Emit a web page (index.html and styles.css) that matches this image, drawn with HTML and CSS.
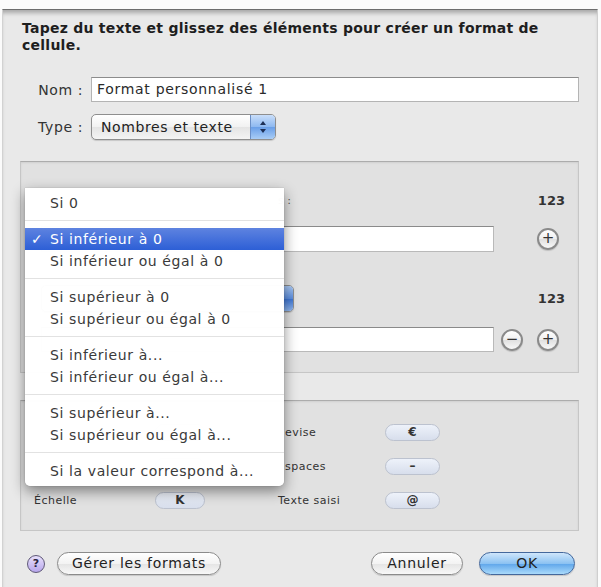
FILE: index.html
```html
<!DOCTYPE html>
<html>
<head>
    <title>Format de cellule</title>
    <link rel="stylesheet" href="styles.css">
</head>
<body>
    <div class="screen-top"></div>

    <!-- format sheet -->
    <div class="dialog">
        <h1 class="intro">Tapez du texte et glissez des éléments pour créer un format de cellule.</h1>

        <div class="form-row row-name">
            <label class="form-label">Nom :</label>
            <div class="text-input">Format personnalisé 1</div>
        </div>
        <div class="form-row row-type">
            <label class="form-label">Type :</label>
            <div class="popup">
                <span class="popup-text">Nombres et texte</span>
                <span class="popup-arrows">
                    <svg width="8" height="14" viewBox="0 0 8 14"><path d="M4 1 L7 5 H1 Z M4 13 L7 9 H1 Z" fill="#1d2f55"/></svg>
                </span>
            </div>
        </div>

        <!-- rules panel, mostly under the open menu -->
        <div class="panel rules">
            <div class="rule-head first">
                <span class="rule-label">s :</span>
                <span class="token-num">123</span>
            </div>
            <div class="rule-field">
                <div class="field"></div>
                <div class="round-btns">
                    <span class="round-btn">+</span>
                </div>
            </div>
            <div class="rule-head second">
                <div class="popup rule-popup">
                    <span class="popup-text"></span>
                    <span class="popup-cap"></span>
                </div>
                <span class="token-num">123</span>
            </div>
            <div class="rule-field">
                <div class="field"></div>
                <div class="round-btns">
                    <span class="round-btn minus">&minus;</span>
                    <span class="round-btn">+</span>
                </div>
            </div>
        </div>

        <!-- elements panel -->
        <div class="panel elements">
            <div class="el-row">
                <span class="el-label"></span><span class="pill blank"></span>
                <span class="el-label right"><span class="cut">evise</span></span><span class="pill wide">€</span>
            </div>
            <div class="el-row">
                <span class="el-label"></span><span class="pill blank"></span>
                <span class="el-label right"><span class="cut">spaces</span></span><span class="pill wide">&ndash;</span>
            </div>
            <div class="el-row">
                <span class="el-label">Échelle</span><span class="pill">K</span>
                <span class="el-label right">Texte saisi</span><span class="pill wide">@</span>
            </div>
        </div>

        <div class="button-row">
            <span class="help">?</span>
            <span class="push-btn manage">Gérer les formats</span>
            <span class="spacer"></span>
            <span class="push-btn cancel">Annuler</span>
            <span class="push-btn ok">OK</span>
        </div>
    </div>

    <!-- open popup menu, lies over the sheet -->
    <div class="menu">
        <div class="menu-item">Si 0</div>
        <div class="menu-sep"></div>
        <div class="menu-item selected"><span class="check">✓</span>Si inférieur à 0</div>
        <div class="menu-item">Si inférieur ou égal à 0</div>
        <div class="menu-sep"></div>
        <div class="menu-item">Si supérieur à 0</div>
        <div class="menu-item">Si supérieur ou égal à 0</div>
        <div class="menu-sep"></div>
        <div class="menu-item">Si inférieur à...</div>
        <div class="menu-item">Si inférieur ou égal à...</div>
        <div class="menu-sep"></div>
        <div class="menu-item">Si supérieur à...</div>
        <div class="menu-item">Si supérieur ou égal à...</div>
        <div class="menu-sep"></div>
        <div class="menu-item">Si la valeur correspond à...</div>
    </div>
</body>
</html>
```

FILE: styles.css
```css
/* page */
body {
    margin: 0;
    background-color: #fbfbfb;
    font-family: 'DejaVu Sans', sans-serif;
    color: #222;
    position: relative;
    width: 601px;
    height: 587px;
    overflow: hidden;
}

.screen-top {
    height: 9px;
    background-color: #fbfbfb;
}

/* sheet */
.dialog {
    margin: 0 3px 0 2px;
    height: 578px;
    box-sizing: border-box;
    padding: 0 18px 0 17px;
    background-color: #e9e9e9;
    border-top: 1px solid #6d6d6d;
    border-left: 1px solid #d2d2d2;
    border-right: 1px solid #cfcfcf;
    box-shadow: inset 0 5px 4px -2px rgba(0, 0, 0, 0.28);
}

.intro {
    margin: 10px 0 0;
    padding-left: 2px;
    font-size: 14px;
    line-height: 17px;
    letter-spacing: 0.25px;
    font-weight: bold;
    color: #1e1e1e;
}

.form-row {
    display: flex;
    align-items: center;
    gap: 8px;
}

.form-label {
    width: 63px;
    text-align: right;
    font-size: 14px;
    letter-spacing: 0.6px;
    color: #333;
}

.row-name {
    margin-top: 23px;
    height: 25px;
}

.row-type {
    margin-top: 12px;
    height: 26px;
}

.text-input {
    flex: 1;
    height: 25px;
    box-sizing: border-box;
    padding: 3px 5px;
    background: #fff;
    border: 1px solid #b4b4b4;
    border-top-color: #8c8c8c;
    font-size: 14px;
    letter-spacing: 0.7px;
    line-height: 17px;
    color: #2a2a2a;
}

/* popup buttons */
.popup {
    display: flex;
    align-items: stretch;
    width: 185px;
    height: 26px;
    box-sizing: border-box;
    border: 1px solid #8e8e8e;
    border-radius: 5px;
    background: linear-gradient(#ffffff, #f1f1f1 50%, #e4e4e4 51%, #f4f4f4);
    overflow: hidden;
    box-shadow: 0 1px 1px rgba(0, 0, 0, 0.15);
}

.popup-text {
    flex: 1;
    padding-left: 9px;
    font-size: 14px;
    letter-spacing: 0.6px;
    line-height: 24px;
    color: #222;
}

.popup-arrows {
    width: 24px;
    display: flex;
    align-items: center;
    justify-content: center;
    border-left: 1px solid #6b8fc6;
    background: linear-gradient(#c9defa, #8db8f0 50%, #6a9fe8 51%, #a9cdf6);
}

.popup-cap {
    width: 9px;
    background: linear-gradient(#a9c8f3, #5d8fe0 50%, #3c74d3 51%, #8fb6ee);
    border-left: 1px solid #5a7fbf;
}

/* panels */
.panel {
    box-sizing: border-box;
    background-color: #e1e1e1;
    border: 1px solid #c6c6c6;
    border-top-color: #acacac;
    box-shadow: inset 0 1px 2px rgba(0, 0, 0, 0.08);
}

.rules {
    margin-top: 21px;
    height: 212px;
    padding: 26px 13px 0 20px;
}

.rule-head {
    display: flex;
    align-items: center;
    justify-content: space-between;
}

.rule-head.first {
    height: 24px;
}

.rule-head.second {
    margin-top: 33px;
    height: 27px;
}

.rule-label {
    width: 250px;
    text-align: right;
    font-size: 11px;
    color: #555;
}

.rule-popup {
    width: 253px;
    height: 27px;
}

.token-num {
    font-size: 13px;
    font-weight: bold;
    color: #333;
}

.rule-field {
    display: flex;
    align-items: center;
    margin-top: 14px;
    height: 26px;
}

.rule-field:last-child {
    margin-top: 15px;
    height: 25px;
}

.field {
    flex: 1;
    height: 100%;
    background: #fff;
    border: 1px solid #b9b9b9;
    border-top-color: #8a8a8a;
    box-sizing: border-box;
}

.round-btns {
    width: 71px;
    box-sizing: border-box;
    padding: 0 6px 0 7px;
    display: flex;
    justify-content: flex-end;
    gap: 14px;
}

.round-btn {
    width: 22px;
    height: 22px;
    box-sizing: border-box;
    border: 2px solid #8a8a8a;
    border-radius: 50%;
    background: linear-gradient(#ffffff, #efefef 50%, #e0e0e0 51%, #f8f8f8);
    font-size: 15px;
    line-height: 17px;
    text-align: center;
    color: #333;
    box-shadow: 0 1px 1px rgba(0, 0, 0, 0.15);
}

.round-btn.minus {
    margin-right: auto;
}

/* element tokens */
.elements {
    margin-top: 27px;
    height: 131px;
    padding: 22px 0 0 13px;
}

.el-row {
    display: flex;
    align-items: center;
    height: 18px;
    margin-bottom: 16px;
}

.el-row:last-child {
    margin-top: 2px;
}

.el-label {
    width: 121px;
    font-size: 11px;
    letter-spacing: 0.5px;
    color: #333;
}

.el-label.right {
    width: 107px;
    margin-left: 73px;
}

/* only the end of these labels shows past the menu */
.cut {
    display: inline-block;
    margin-left: 7px;
}

.pill {
    width: 50px;
    height: 17px;
    box-sizing: border-box;
    border: 1px solid #bcc2cf;
    border-radius: 9px;
    background: linear-gradient(#eef2fa, #d7deec);
    font-size: 12px;
    line-height: 15px;
    text-align: center;
    font-weight: bold;
    color: #333;
}

.pill.wide {
    width: 55px;
}

/* bottom buttons */
.button-row {
    display: flex;
    align-items: center;
    margin-top: 21px;
    height: 23px;
    padding: 0 4px 0 7px;
}

.spacer {
    flex: 1;
}

.help {
    width: 18px;
    height: 18px;
    box-sizing: border-box;
    border: 1px solid #5f5878;
    border-radius: 50%;
    background: linear-gradient(#e8e0fb, #b7a6ec);
    font-size: 11px;
    font-weight: bold;
    line-height: 16px;
    text-align: center;
    color: #2a2440;
    margin-right: 12px;
}

.push-btn {
    height: 23px;
    box-sizing: border-box;
    border: 1px solid #8b8b8b;
    border-radius: 12px;
    background: linear-gradient(#ffffff, #f3f3f3 50%, #e4e4e4 51%, #f8f8f8);
    font-size: 14px;
    letter-spacing: 0.7px;
    line-height: 21px;
    text-align: center;
    color: #222;
    box-shadow: 0 1px 1px rgba(0, 0, 0, 0.15);
}

.manage {
    width: 164px;
}

.cancel {
    width: 92px;
    margin-right: 16px;
}

.ok {
    width: 96px;
    border-color: #44689c;
    background: linear-gradient(#cfe6fb, #8cc2f2 50%, #5ea5ea 51%, #a9dafb);
}

/* popup menu */
.menu {
    position: absolute;
    left: 25px;
    top: 188px;
    width: 259px;
    padding: 4px 0;
    background: rgba(255, 255, 255, 0.98);
    border-radius: 0 0 5px 5px;
    box-shadow: 0 5px 14px rgba(0, 0, 0, 0.45), 0 0 1px rgba(0, 0, 0, 0.4);
}

.menu-item {
    position: relative;
    height: 22px;
    padding-left: 25px;
    font-size: 14px;
    letter-spacing: 0.6px;
    line-height: 22px;
    color: #3a3a3a;
}

.menu-item.selected {
    color: #fff;
    background: linear-gradient(#5e83e0, #2d5fd6);
}

.check {
    position: absolute;
    left: 6px;
}

.menu-sep {
    height: 14px;
    background: linear-gradient(transparent 6px, #e2e2e2 6px, #e2e2e2 7px, transparent 7px);
}
```
